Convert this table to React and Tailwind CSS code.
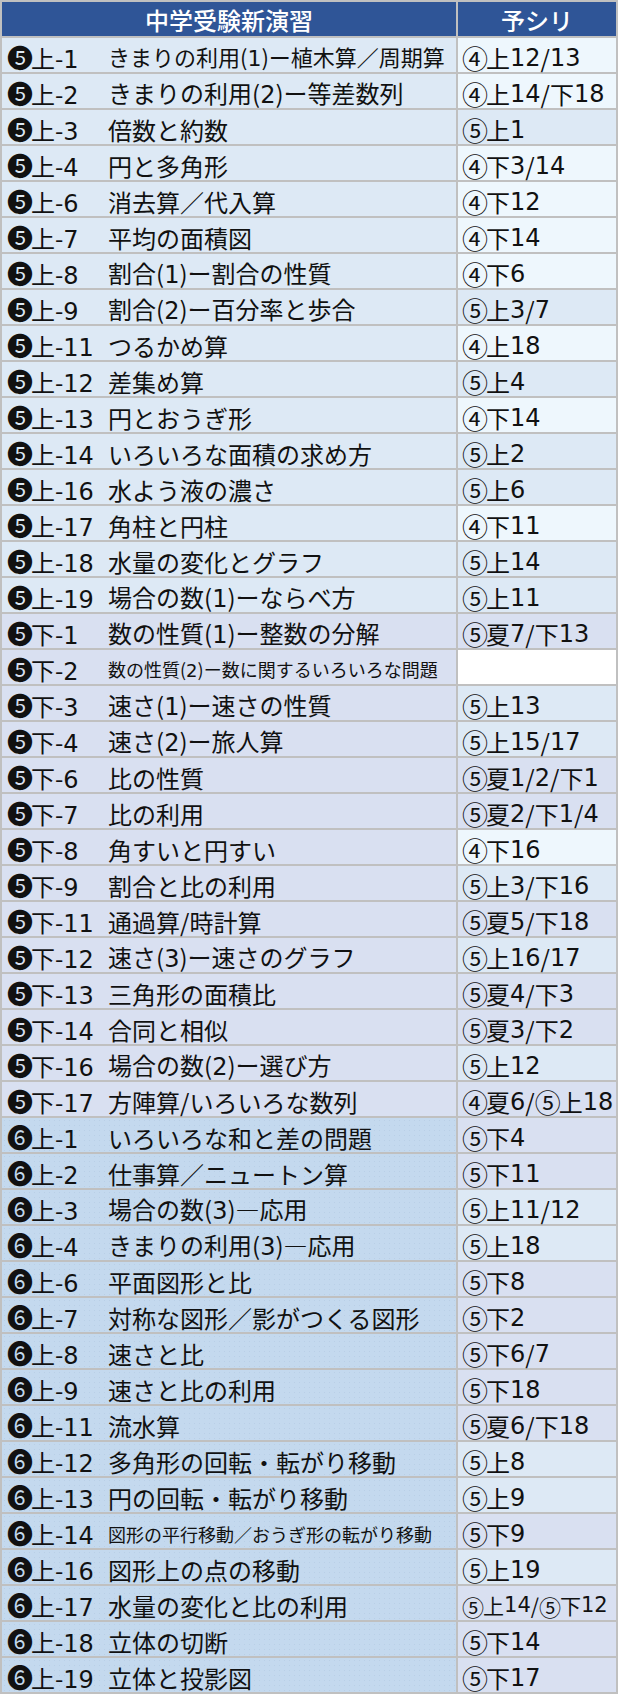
import React from "react";

const L = "light"; // ④ pale
const B = "blue"; // ⑤上
const V = "lav"; // ⑤下/夏
const W = "white";

// [label, title, ref, rightColour, section, titleSize, refSize]
const rows = [
  ["❺上-1", "きまりの利用(1)ー植木算／周期算", "④上12/13", L, "a", "t22"],
  ["❺上-2", "きまりの利用(2)ー等差数列", "④上14/下18", L, "a"],
  ["❺上-3", "倍数と約数", "⑤上1", B, "a"],
  ["❺上-4", "円と多角形", "④下3/14", L, "a"],
  ["❺上-6", "消去算／代入算", "④下12", L, "a"],
  ["❺上-7", "平均の面積図", "④下14", L, "a"],
  ["❺上-8", "割合(1)ー割合の性質", "④下6", L, "a"],
  ["❺上-9", "割合(2)ー百分率と歩合", "⑤上3/7", B, "a"],
  ["❺上-11", "つるかめ算", "④上18", L, "a"],
  ["❺上-12", "差集め算", "⑤上4", B, "a"],
  ["❺上-13", "円とおうぎ形", "④下14", L, "a"],
  ["❺上-14", "いろいろな面積の求め方", "⑤上2", B, "a"],
  ["❺上-16", "水よう液の濃さ", "⑤上6", B, "a"],
  ["❺上-17", "角柱と円柱", "④下11", L, "a"],
  ["❺上-18", "水量の変化とグラフ", "⑤上14", B, "a"],
  ["❺上-19", "場合の数(1)ーならべ方", "⑤上11", B, "a"],
  ["❺下-1", "数の性質(1)ー整数の分解", "⑤夏7/下13", V, "b"],
  ["❺下-2", "数の性質(2)ー数に関するいろいろな問題", "", W, "b", "t18"],
  ["❺下-3", "速さ(1)ー速さの性質", "⑤上13", B, "b"],
  ["❺下-4", "速さ(2)ー旅人算", "⑤上15/17", B, "b"],
  ["❺下-6", "比の性質", "⑤夏1/2/下1", V, "b"],
  ["❺下-7", "比の利用", "⑤夏2/下1/4", V, "b"],
  ["❺下-8", "角すいと円すい", "④下16", L, "b"],
  ["❺下-9", "割合と比の利用", "⑤上3/下16", B, "b"],
  ["❺下-11", "通過算/時計算", "⑤夏5/下18", V, "b"],
  ["❺下-12", "速さ(3)ー速さのグラフ", "⑤上16/17", B, "b"],
  ["❺下-13", "三角形の面積比", "⑤夏4/下3", V, "b"],
  ["❺下-14", "合同と相似", "⑤夏3/下2", V, "b"],
  ["❺下-16", "場合の数(2)ー選び方", "⑤上12", B, "b"],
  ["❺下-17", "方陣算/いろいろな数列", "④夏6/⑤上18", V, "b"],
  ["❻上-1", "いろいろな和と差の問題", "⑤下4", V, "c"],
  ["❻上-2", "仕事算／ニュートン算", "⑤下11", V, "c"],
  ["❻上-3", "場合の数(3)―応用", "⑤上11/12", B, "c"],
  ["❻上-4", "きまりの利用(3)―応用", "⑤上18", B, "c"],
  ["❻上-6", "平面図形と比", "⑤下8", V, "c"],
  ["❻上-7", "対称な図形／影がつくる図形", "⑤下2", V, "c"],
  ["❻上-8", "速さと比", "⑤下6/7", V, "c"],
  ["❻上-9", "速さと比の利用", "⑤下18", V, "c"],
  ["❻上-11", "流水算", "⑤夏6/下18", V, "c"],
  ["❻上-12", "多角形の回転・転がり移動", "⑤上8", B, "c"],
  ["❻上-13", "円の回転・転がり移動", "⑤上9", B, "c"],
  ["❻上-14", "図形の平行移動／おうぎ形の転がり移動", "⑤下9", V, "c", "t18"],
  ["❻上-16", "図形上の点の移動", "⑤上19", B, "c"],
  ["❻上-17", "水量の変化と比の利用", "⑤上14/⑤下12", V, "c", null, "r21"],
  ["❻上-18", "立体の切断", "⑤下14", V, "c"],
  ["❻上-19", "立体と投影図", "⑤下17", V, "c"],
];

const rightBg = {
  light: "bg-[#eef7fd]",
  blue: "bg-[#dde9f5]",
  lav: "bg-[#d9e0f1]",
  white: "bg-white",
};

const leftBg = {
  a: "bg-[#dde9f5]",
  b: "bg-[#d9e0f1]",
  c: "bg-[#c4d9ee] bg-[radial-gradient(circle,#b9cfe6_0.6px,transparent_0.9px)] bg-[length:5px_5px]",
};

const titleSize = { t22: "text-[22px]", t18: "text-[18px]" };
const refSize = { r21: "text-[21px]" };

function Mixed({ text, small }) {
  const parts = text.split(/(\d+|[❺❻]|[④⑤])/);
  return parts.map((p, i) => {
    if (!p) return null;
    if (/^\d+$/.test(p))
      return (
        <span key={i} className="font-['DejaVu_Sans']">
          {p}
        </span>
      );
    if (/^[❺❻]$/.test(p))
      return (
        <span key={i} className="text-[26px] mr-[-2px]">
          {p}
        </span>
      );
    if (/^[④⑤]$/.test(p))
      return (
        <span key={i} className={small ? "text-[22px] mr-[-1px]" : "text-[26px] mr-[-2px]"}>
          {p}
        </span>
      );
    return <React.Fragment key={i}>{p}</React.Fragment>;
  });
}

export default function App() {
  return (
    <div className="w-[618px] bg-[#c0c0c0] p-[2px] flex flex-col gap-[2px] text-[#111] font-['Noto_Sans_CJK_JP',sans-serif]">
      <div className="grid grid-cols-[454px_158px] gap-[2px] h-[34px]">
        <div className="bg-[#2f5597] text-white text-[24px] font-medium flex items-center justify-center leading-none pt-[2px]">
          中学受験新演習
        </div>
        <div className="bg-[#2f5597] text-white text-[24px] font-medium flex items-center justify-center leading-none pt-[2px]">
          予シリ
        </div>
      </div>
      {rows.map(([label, title, ref, rc, sec, ts, rs]) => (
        <div key={label} className="grid grid-cols-[454px_158px] gap-[2px] h-[34px]">
          <div
            className={`${leftBg[sec]} flex items-center pl-[5px] pt-[5px] leading-none whitespace-nowrap`}
          >
            <span className="w-[101px] shrink-0 text-[24px]">
              <Mixed text={label} />
            </span>
            <span className={ts ? titleSize[ts] : "text-[24px]"}>
              <Mixed text={title} />
            </span>
          </div>
          <div
            className={`${rightBg[rc]} flex items-center pl-[4px] pt-[5px] leading-none whitespace-nowrap ${
              rs ? refSize[rs] : "text-[24px]"
            }`}
          >
            <Mixed text={ref} small={!!rs} />
          </div>
        </div>
      ))}
    </div>
  );
}
